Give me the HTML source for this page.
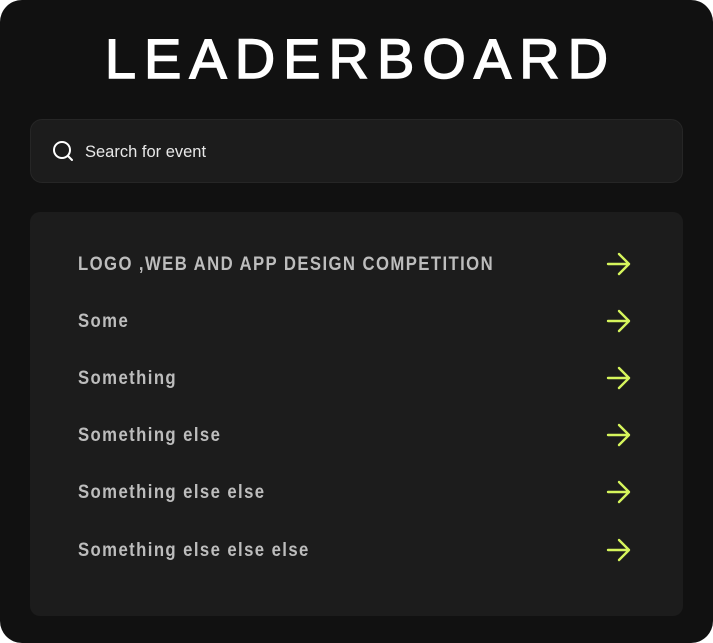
<!DOCTYPE html>
<html><head><style>
html,body{margin:0;padding:0;background:#fff;}
.card{position:absolute;left:0;top:0;width:713px;height:643px;background:#111;border-radius:22px;overflow:hidden;font-family:"Liberation Sans",sans-serif;}
.title{position:absolute;left:0;width:713px;top:24px;text-align:center;color:#fff;font-size:56px;letter-spacing:8px;line-height:70px;font-weight:normal;-webkit-text-stroke:1.4px #fff;padding-left:8px;box-sizing:border-box;}
.search{position:absolute;left:30px;top:119px;width:651px;height:62px;background:#1c1c1c;border:1px solid #262626;border-radius:12px;}
.search svg{position:absolute;left:21px;top:20px;}
.search span{position:absolute;left:54px;top:22px;color:#e8e8e8;font-size:16.5px;line-height:20px;}
.list{position:absolute;left:30px;top:212px;width:653px;height:404px;background:#1c1c1c;border-radius:10px;}
.item{position:absolute;left:48px;height:30px;width:560px;}
.item span{position:absolute;left:0;top:5px;color:#bdbdbd;font-weight:bold;font-size:19px;letter-spacing:1.6px;line-height:22px;transform:scaleX(0.88);transform-origin:0 50%;white-space:nowrap;}
.item svg{position:absolute;left:528px;top:2px;}
</style></head><body>
<div class="card">
<div class="title">LEADERBOARD</div>
<div class="search">
<svg width="22" height="22" viewBox="0 0 22 22"><circle cx="10" cy="10" r="8" fill="none" stroke="#fff" stroke-width="2"/><path d="M16 16l4 4" stroke="#fff" stroke-width="2" stroke-linecap="round"/></svg>
<span>Search for event</span>
</div>
<div class="list">
<div class="item" style="top:37px"><span>LOGO ,WEB AND APP DESIGN COMPETITION</span><svg width="26" height="26" viewBox="0 0 26 26"><path d="M2 13h21M13 3l10 10-10 10" fill="none" stroke="#d6f55c" stroke-width="2.4" stroke-linecap="round" stroke-linejoin="round"/></svg></div>
<div class="item" style="top:94px"><span>Some</span><svg width="26" height="26" viewBox="0 0 26 26"><path d="M2 13h21M13 3l10 10-10 10" fill="none" stroke="#d6f55c" stroke-width="2.4" stroke-linecap="round" stroke-linejoin="round"/></svg></div>
<div class="item" style="top:151px"><span>Something</span><svg width="26" height="26" viewBox="0 0 26 26"><path d="M2 13h21M13 3l10 10-10 10" fill="none" stroke="#d6f55c" stroke-width="2.4" stroke-linecap="round" stroke-linejoin="round"/></svg></div>
<div class="item" style="top:208px"><span>Something else</span><svg width="26" height="26" viewBox="0 0 26 26"><path d="M2 13h21M13 3l10 10-10 10" fill="none" stroke="#d6f55c" stroke-width="2.4" stroke-linecap="round" stroke-linejoin="round"/></svg></div>
<div class="item" style="top:265px"><span>Something else else</span><svg width="26" height="26" viewBox="0 0 26 26"><path d="M2 13h21M13 3l10 10-10 10" fill="none" stroke="#d6f55c" stroke-width="2.4" stroke-linecap="round" stroke-linejoin="round"/></svg></div>
<div class="item" style="top:323px"><span>Something else else else</span><svg width="26" height="26" viewBox="0 0 26 26"><path d="M2 13h21M13 3l10 10-10 10" fill="none" stroke="#d6f55c" stroke-width="2.4" stroke-linecap="round" stroke-linejoin="round"/></svg></div>
</div>
</div>
</body></html>
